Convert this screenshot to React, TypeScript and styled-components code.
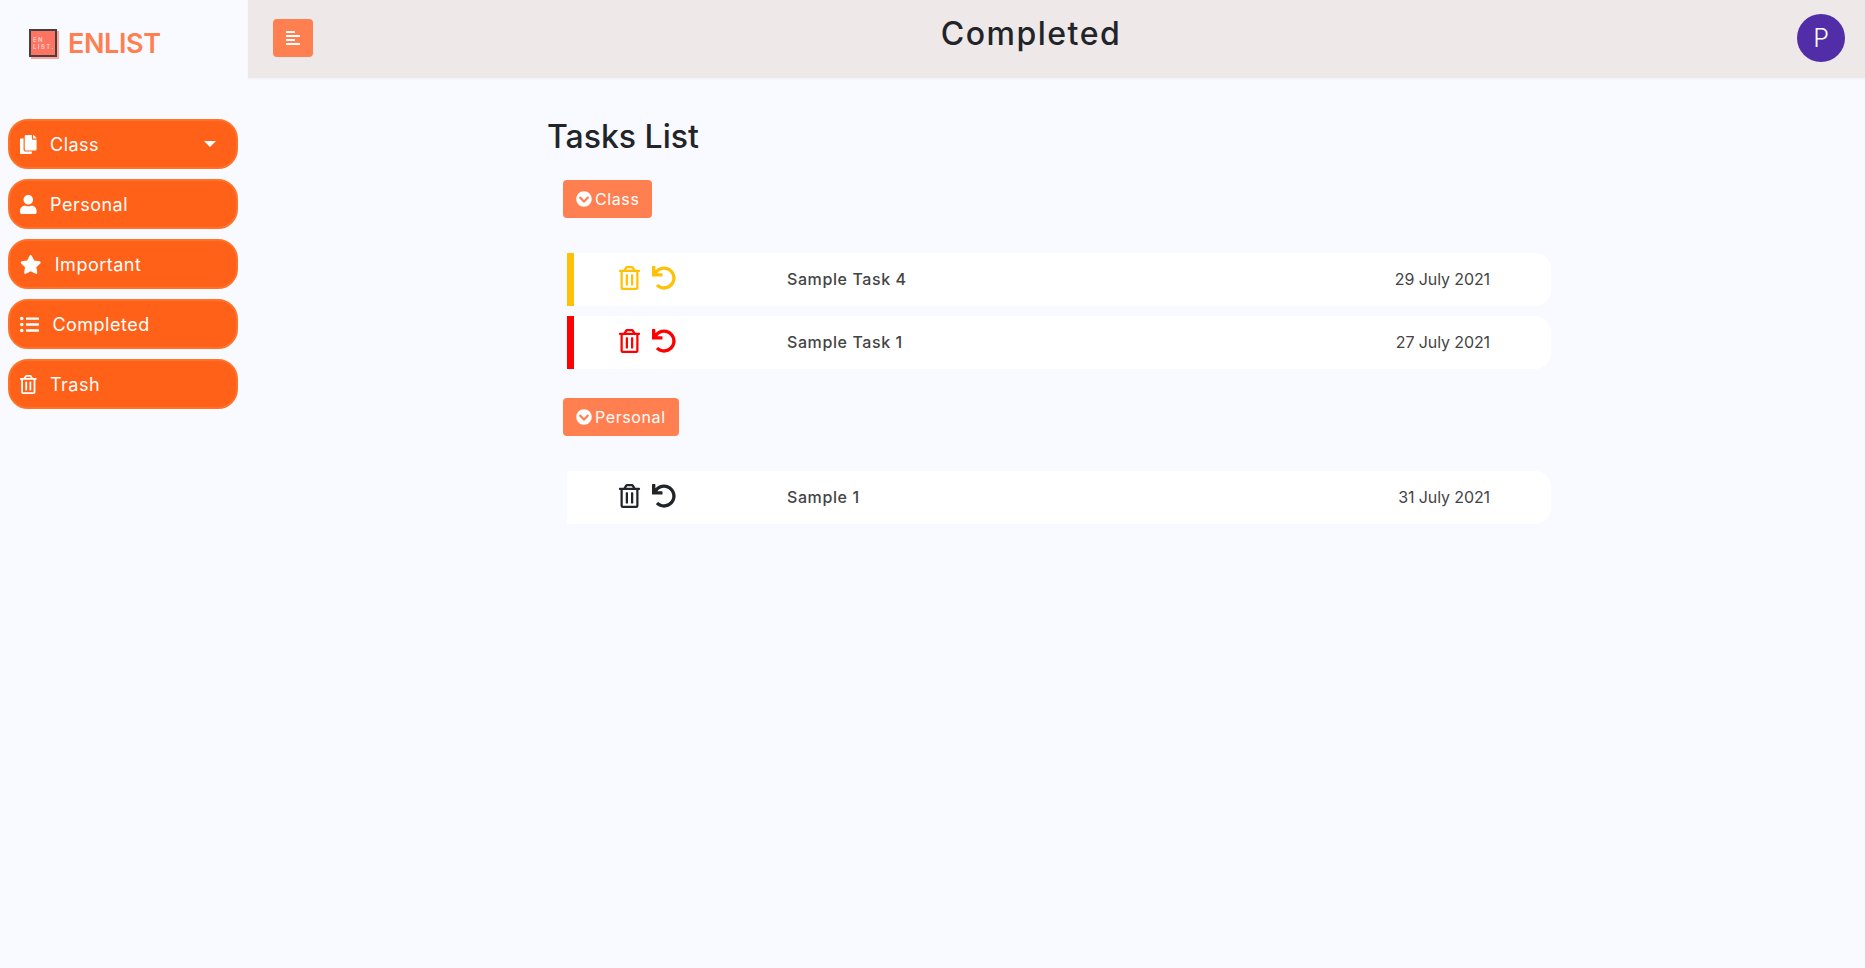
import React from "react";
import styled, { createGlobalStyle } from "styled-components";
import {
  FaAlignLeft,
  FaChevronCircleDown,
  FaCopy,
  FaListUl,
  FaRegTrashAlt,
  FaStar,
  FaUndo,
  FaUser,
} from "react-icons/fa";

const Global = createGlobalStyle`
  html, body { margin: 0; padding: 0; height: 100%; }
  body { background: #f9faff; font-family: Inter, "Open Sans", sans-serif; color: #212529; }
`;

const Shell = styled.div`
  display: flex;
  min-height: 968px;
  background: #f9faff;
`;

const Sidebar = styled.aside`
  width: 248px;
  flex: none;
  box-sizing: border-box;
  padding: 0 10px 0 8px;
`;

const Brand = styled.div`
  display: flex;
  align-items: center;
  height: 119px;
  padding: 0 0 33px 21px;
  box-sizing: border-box;
`;

const LogoMark = styled.div`
  width: 28px;
  height: 28px;
  flex: none;
  box-sizing: border-box;
  border: 2px solid #45403f;
  background: #ff7363;
  box-shadow: 2px 2px 0 #ffa59a;
  color: #ffc9c2;
  font-size: 6px;
  line-height: 7px;
  font-weight: 700;
  letter-spacing: 1.4px;
  padding: 5px 0 0 2px;
  overflow: hidden;
  white-space: pre;
`;

const BrandName = styled.span`
  margin-left: 11px;
  font-size: 27px;
  font-weight: 600;
  letter-spacing: -0.4px;
  color: #ff7f50;
`;

const Nav = styled.nav`
  display: flex;
  flex-direction: column;
  gap: 10px;
`;

const NavButton = styled.div<{ $iconWidth: number }>`
  height: 50px;
  box-sizing: border-box;
  border: 2px solid #ff7229;
  border-radius: 20px;
  background: #ff6119;
  color: #fff;
  display: flex;
  align-items: center;
  gap: 13.4px;
  padding-left: 10px;
  font-size: 18px;
  letter-spacing: 0.5px;
  svg { flex: none; width: ${(p) => p.$iconWidth}px; height: 19px; }
`;

const Caret = styled.span`
  margin-left: auto;
  margin-right: 20px;
  border-top: 6px solid #fff;
  border-left: 6px solid transparent;
  border-right: 6px solid transparent;
`;

const Main = styled.main`
  flex: 1;
  min-width: 0;
`;

const TopBar = styled.header`
  height: 78px;
  box-sizing: border-box;
  background: #efe8e8;
  box-shadow: 0 1px 2px rgba(0, 0, 0, 0.04);
  display: flex;
  align-items: center;
  padding: 0 20px 2px 25px;
`;

const Toggle = styled.button`
  width: 40px;
  height: 38px;
  flex: none;
  padding: 0;
  border: 0;
  border-radius: 4px;
  background: #ff7f50;
  color: #fff;
  display: flex;
  align-items: center;
  justify-content: center;
  font-size: 16px;
`;

const PageTitle = styled.h1`
  flex: 1;
  margin: -9px 48px 0 0;
  text-align: center;
  font-size: 32px;
  line-height: 48px;
  font-weight: 500;
  color: #212529;
  letter-spacing: 1.5px;
`;

const Avatar = styled.div`
  width: 48px;
  height: 48px;
  flex: none;
  border-radius: 50%;
  background: #512da8;
  color: #fff;
  display: flex;
  align-items: center;
  justify-content: center;
  font-size: 25px;
  font-weight: 300;
`;

const Content = styled.section`
  padding: 38px 0 0 300px;
  width: 1003px;
`;

const Heading = styled.h2`
  margin: 0 0 23px -1px;
  font-size: 32px;
  line-height: 41px;
  font-weight: 500;
  color: #212529;
`;

const Chip = styled.div`
  display: inline-flex;
  align-items: center;
  height: 38px;
  box-sizing: border-box;
  margin-left: 15px;
  padding: 0 13px;
  gap: 3px;
  border-radius: 4px;
  background: #ff7f50;
  color: #fff;
  font-size: 16px;
  letter-spacing: 0.6px;
`;

const Group = styled.div`
  margin-bottom: 29px;
`;

const Rows = styled.div`
  margin: 35px 0 0 19px;
  display: flex;
  flex-direction: column;
  gap: 10px;
`;

const Row = styled.div<{ $accent: string }>`
  height: 53px;
  box-sizing: border-box;
  display: flex;
  align-items: center;
  background: #fff;
  border-left: 7px solid ${(p) => p.$accent};
  border-radius: 0 16px 16px 0;
  padding-right: 61px;
`;

const Actions = styled.div<{ $color: string }>`
  width: 213px;
  flex: none;
  box-sizing: border-box;
  padding: 0 0 4px 45px;
  display: flex;
  align-items: center;
  gap: 12px;
  color: ${(p) => p.$color};
  svg { display: block; width: 24px; height: 24px; }
  svg:first-child { width: 21px; }
`;

const TaskName = styled.span`
  flex: 1;
  padding-bottom: 2px;
  font-size: 16px;
  font-weight: 500;
  letter-spacing: 0.6px;
  color: #444;
`;

const TaskDate = styled.span`
  padding-bottom: 2px;
  font-size: 16px;
  letter-spacing: -0.1px;
  color: #444;
`;

type Task = { name: string; date: string; accent: string; color: string };

const groups: { label: string; tasks: Task[] }[] = [
  {
    label: "Class",
    tasks: [
      { name: "Sample Task 4", date: "29 July 2021", accent: "#ffc107", color: "#ffc107" },
      { name: "Sample Task 1", date: "27 July 2021", accent: "#ff0000", color: "#ff0000" },
    ],
  },
  {
    label: "Personal",
    tasks: [{ name: "Sample 1", date: "31 July 2021", accent: "#ffffff", color: "#212529" }],
  },
];

const navItems = [
  { label: "Personal", Icon: FaUser, width: 16.6 },
  { label: "Important", Icon: FaStar, width: 21.4 },
  { label: "Completed", Icon: FaListUl, width: 19 },
  { label: "Trash", Icon: FaRegTrashAlt, width: 16.6 },
];

export default function App() {
  return (
    <Shell>
      <Global />
      <Sidebar>
        <Brand>
          <LogoMark>{"EN\nLIST."}</LogoMark>
          <BrandName>ENLIST</BrandName>
        </Brand>
        <Nav>
          <NavButton $iconWidth={16.6}><FaCopy />Class<Caret /></NavButton>
          {navItems.map(({ label, Icon, width }) => (
            <NavButton key={label} $iconWidth={width}><Icon />{label}</NavButton>
          ))}
        </Nav>
      </Sidebar>
      <Main>
        <TopBar>
          <Toggle aria-label="Toggle sidebar"><FaAlignLeft /></Toggle>
          <PageTitle>Completed</PageTitle>
          <Avatar>P</Avatar>
        </TopBar>
        <Content>
          <Heading>Tasks List</Heading>
          {groups.map((g) => (
            <Group key={g.label}>
              <Chip><FaChevronCircleDown />{g.label}</Chip>
              <Rows>
                {g.tasks.map((t) => (
                  <Row key={t.name} $accent={t.accent}>
                    <Actions $color={t.color}><FaRegTrashAlt /><FaUndo /></Actions>
                    <TaskName>{t.name}</TaskName>
                    <TaskDate>{t.date}</TaskDate>
                  </Row>
                ))}
              </Rows>
            </Group>
          ))}
        </Content>
      </Main>
    </Shell>
  );
}
